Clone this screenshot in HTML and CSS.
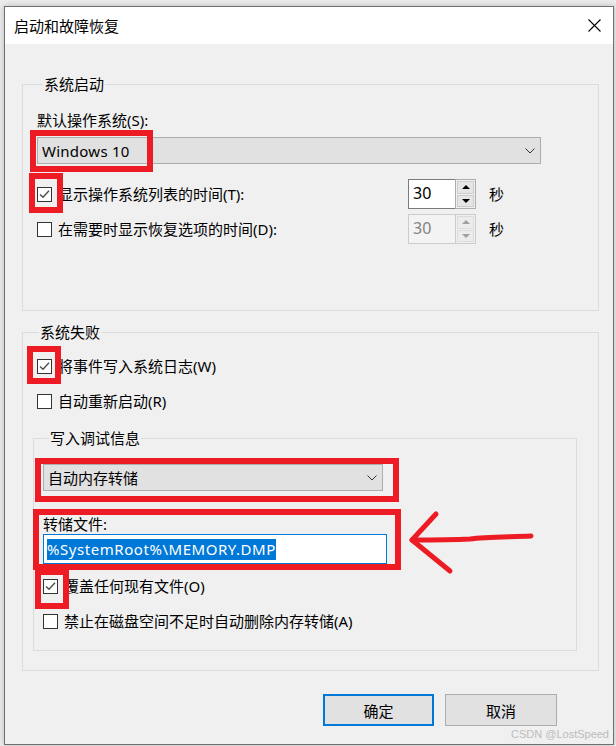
FILE: index.html
```html
<!DOCTYPE html>
<html lang="zh-CN">
<head>
<meta charset="utf-8">
<title>启动和故障恢复</title>
<link rel="stylesheet" href="styles.css">
</head>
<body>
<div class="screen">
  <div class="window">
    <div class="titlebar">
      <span class="title">启动和故障恢复</span>
      <svg class="close" width="13" height="13" viewBox="0 0 13 13"><path d="M0.5 0.5 L12.5 12.5 M12.5 0.5 L0.5 12.5" stroke="#000" stroke-width="1.1" fill="none"/></svg>
    </div>
    <div class="body">
      <fieldset class="group g-startup">
        <legend>系统启动</legend>
        <div class="label first">默认操作系统(S):</div>
        <div class="combo combo-os">
          <span class="latin">Windows 10</span>
          <svg class="chev" width="10" height="6" viewBox="0 0 10 6"><path d="M0.5 0.5 L5 5 L9.5 0.5" stroke="#333" stroke-width="1" fill="none"/></svg>
        </div>
        <div class="row timer t1">
          <div class="check wide">
            <span class="box"><svg width="13" height="13" viewBox="0 0 13 13"><path d="M2 6.5 L5 9.3 L11 2.8" stroke="#4d4d4d" stroke-width="1.4" fill="none"/></svg></span>
            <span>显示操作系统列表的时间(T):</span>
          </div>
          <div class="spin">
            <div class="spin-field">30</div>
            <div class="spin-btns">
              <div class="sbtn"><span class="tri up"></span></div>
              <div class="sbtn"><span class="tri down"></span></div>
            </div>
          </div>
          <span class="unit">秒</span>
        </div>
        <div class="row timer t2">
          <div class="check wide">
            <span class="box"></span>
            <span>在需要时显示恢复选项的时间(D):</span>
          </div>
          <div class="spin disabled">
            <div class="spin-field">30</div>
            <div class="spin-btns">
              <div class="sbtn"><span class="tri up"></span></div>
              <div class="sbtn"><span class="tri down"></span></div>
            </div>
          </div>
          <span class="unit">秒</span>
        </div>
      </fieldset>

      <fieldset class="group g-failure">
        <legend>系统失败</legend>
        <div class="row line r-log">
          <div class="check">
            <span class="box"><svg width="13" height="13" viewBox="0 0 13 13"><path d="M2 6.5 L5 9.3 L11 2.8" stroke="#4d4d4d" stroke-width="1.4" fill="none"/></svg></span>
            <span>将事件写入系统日志(W)</span>
          </div>
        </div>
        <div class="row line r-restart">
          <div class="check">
            <span class="box"></span>
            <span>自动重新启动(R)</span>
          </div>
        </div>

        <fieldset class="group g-debug">
          <legend>写入调试信息</legend>
          <div class="combo combo-dump">
            <span>自动内存转储</span>
            <svg class="chev" width="10" height="6" viewBox="0 0 10 6"><path d="M0.5 0.5 L5 5 L9.5 0.5" stroke="#333" stroke-width="1" fill="none"/></svg>
          </div>
          <div class="label dump-label">转储文件:</div>
          <div class="textbox"><span class="sel">%SystemRoot%\MEMORY.DMP</span></div>
          <div class="row line r-overwrite">
            <div class="check">
              <span class="box"><svg width="13" height="13" viewBox="0 0 13 13"><path d="M2 6.5 L5 9.3 L11 2.8" stroke="#4d4d4d" stroke-width="1.4" fill="none"/></svg></span>
              <span>覆盖任何现有文件(O)</span>
            </div>
          </div>
          <div class="row line r-disable">
            <div class="check">
              <span class="box"></span>
              <span>禁止在磁盘空间不足时自动删除内存转储(A)</span>
            </div>
          </div>
        </fieldset>
      </fieldset>

      <div class="actions">
        <button class="btn default">确定</button>
        <button class="btn">取消</button>
      </div>
    </div>
  </div>

  <div class="mark m-combo"></div>
  <div class="mark m-check1"></div>
  <div class="mark m-check2"></div>
  <div class="mark m-dump"></div>
  <div class="mark m-file"></div>
  <div class="mark m-check3"></div>
  <svg class="arrow" width="134" height="70" viewBox="0 0 134 70">
    <path d="M126 28 C 105 29, 80 29, 65 31 C 45 32, 25 32, 7 32" stroke="#ed1c24" stroke-width="5" fill="none" stroke-linecap="round"/>
    <path d="M31 6 L7 32 L45 63" stroke="#ed1c24" stroke-width="5" fill="none" stroke-linecap="round" stroke-linejoin="round"/>
  </svg>
  <div class="watermark">CSDN @LostSpeed</div>
</div>
</body>
</html>
```

FILE: styles.css
```css
* { box-sizing: border-box; }
html, body { margin: 0; padding: 0; }
body {
  background: #f0f0f0;
  font-family: "Noto Sans", "Noto Sans CJK SC", sans-serif;
  font-size: 15px;
  color: #000;
}
.screen {
  position: relative;
  width: 616px;
  height: 746px;
  overflow: hidden;
  background: #ececec;
  padding: 6px 2px 1px 4px;
}
.window {
  width: 610px;
  height: 739px;
  border: 1px solid #6f6f6f;
  background: #f0f0f0;
  box-shadow: 0 0 6px rgba(0, 0, 0, 0.22);
  display: flex;
  flex-direction: column;
}
.titlebar {
  flex: none;
  height: 37px;
  background: #fff;
  display: flex;
  align-items: center;
  justify-content: space-between;
  padding: 0 12px 0 9px;
}
.title { line-height: 20px; }
.close { display: block; }

.body { padding: 30px 14px 0 17px; }

fieldset.group {
  margin: 0;
  padding: 0;
  min-width: 0;
  border: 1px solid #dcdcdc;
}
fieldset.group > legend {
  margin-left: 6px;
  padding: 0 1px;
  line-height: 20px;
}
.g-startup { padding: 0 0 66px 14px !important; }
.g-failure { margin-top: 11px !important; padding: 0 21px 19px 10px !important; }
.g-debug { margin-top: 17px !important; padding: 0 0 19px 9px !important; }

.label { line-height: 20px; }
.label.first { margin-top: 16px; }
.dump-label { margin-top: 23px; }

.combo {
  height: 27px;
  border: 1px solid #adadad;
  background: #e1e1e1;
  display: flex;
  align-items: center;
  justify-content: space-between;
  padding: 0 5px 0 4px;
  line-height: 20px;
}
.combo-os { width: 504px; margin-top: 7px; }
.combo-dump { width: 340px; margin-top: 16px; }
.latin { letter-spacing: 0.25px; }
.chev { display: block; }

.row { display: flex; align-items: center; }
.timer { height: 30px; }
.t1 { margin-top: 15px; }
.t2 { margin-top: 5px; }
.line { height: 20px; margin-left: 4px; }
.r-log { margin-top: 14px; }
.r-restart { margin-top: 15px; }
.g-debug .line { margin-left: 0; }
.r-overwrite { margin-top: 12px; }
.r-disable { margin-top: 15px; }

.check {
  display: flex;
  align-items: center;
  gap: 6px;
  line-height: 20px;
  white-space: nowrap;
}
.check.wide { width: 371px; }
.box {
  flex: none;
  width: 15px;
  height: 15px;
  border: 1px solid #333;
  background: #fff;
  display: flex;
  align-items: center;
  justify-content: center;
}
.box svg { display: block; }

.spin { display: flex; height: 30px; width: 68px; }
.spin-field {
  width: 47px;
  border: 1px solid #7a7a7a;
  border-right: none;
  background: #fff;
  padding-left: 4px;
  line-height: 27px;
  font-size: 16px;
}
.spin-btns {
  width: 21px;
  border: 1px solid #adadad;
  background: #f0f0f0;
  display: flex;
  flex-direction: column;
  padding: 1px;
  gap: 1px;
}
.sbtn {
  flex: 1;
  border: 1px solid #cdcdcd;
  background: #e5e5e5;
  display: flex;
  align-items: center;
  justify-content: center;
}
.tri { width: 0; height: 0; border-left: 4px solid transparent; border-right: 4px solid transparent; }
.tri.up { border-bottom: 4px solid #000; }
.tri.down { border-top: 4px solid #000; }
.spin.disabled .spin-field { border-color: #cccccc; background: #f3f3f3; color: #838383; }
.spin.disabled .spin-btns { border-color: #cccccc; }
.spin.disabled .sbtn { border-color: #dcdcdc; background: #ececec; }
.spin.disabled .tri.up { border-bottom-color: #a0a0a0; }
.spin.disabled .tri.down { border-top-color: #a0a0a0; }
.unit { margin-left: 13px; line-height: 20px; }

.textbox {
  width: 344px;
  height: 30px;
  border: 1px solid #0078d7;
  background: #fff;
  padding-left: 3px;
  display: flex;
  align-items: center;
}
.sel {
  background: #0078d7;
  color: #fff;
  line-height: 21px;
  white-space: nowrap;
  letter-spacing: 0.55px;
}

.actions {
  display: flex;
  justify-content: flex-end;
  gap: 11px;
  margin-top: 23px;
  padding-right: 42px;
}
.btn {
  width: 111px;
  height: 32px;
  border: 1px solid #adadad;
  background: #e1e1e1;
  font-family: inherit;
  font-size: 15px;
  color: #000;
  padding: 0;
}
.btn + .btn { width: 112px; }
.btn.default { border: 2px solid #0078d7; }

.mark {
  position: absolute;
  border: 6px solid #ed1c24;
}
.m-combo { left: 30px; top: 130px; width: 123px; height: 42px; }
.m-check1 { left: 29px; top: 173px; width: 34px; height: 40px; }
.m-check2 { left: 27px; top: 346px; width: 34px; height: 38px; }
.m-dump { left: 35px; top: 458px; width: 364px; height: 44px; }
.m-file { left: 33px; top: 509px; width: 368px; height: 61px; }
.m-check3 { left: 35px; top: 569px; width: 34px; height: 40px; }
.arrow { position: absolute; left: 405px; top: 508px; }

.watermark {
  position: absolute;
  right: 7px;
  top: 726px;
  font-family: "Liberation Sans", sans-serif;
  font-size: 11px;
  line-height: 16px;
  color: #bcbcbc;
}
```
